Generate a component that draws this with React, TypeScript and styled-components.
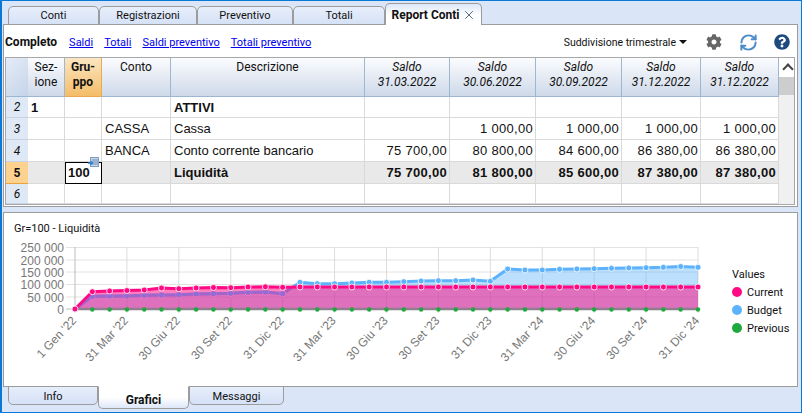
import React from 'react';
import styled, { createGlobalStyle } from 'styled-components';
import { FaCog, FaQuestionCircle } from 'react-icons/fa';
import { RefreshCw, X } from 'lucide-react';

const UI_FONT = 'Roboto, "Noto Sans", sans-serif';
const COLUMNS = '22px 37px 37px 69px 194px 85px 86px 86px 79px 78px';
const ROWS = '39px 21px 22px 22px 22px 20px';

const topTabs = [
  { label: 'Conti', width: 91 },
  { label: 'Registrazioni', width: 98 },
  { label: 'Preventivo', width: 96 },
  { label: 'Totali', width: 92 },
];

const bottomTabs = [
  { label: 'Info', width: 90, active: false },
  { label: 'Grafici', width: 91, active: true },
  { label: 'Messaggi', width: 95, active: false },
];

const links = ['Saldi', 'Totali', 'Saldi preventivo', 'Totali preventivo'];

const headers = [
  { top: 'Sez-', bottom: 'ione' },
  { top: 'Gru-', bottom: 'ppo', selected: true },
  { top: 'Conto', bottom: '' },
  { top: 'Descrizione', bottom: '' },
  { top: 'Saldo', bottom: '31.03.2022', italic: true },
  { top: 'Saldo', bottom: '30.06.2022', italic: true },
  { top: 'Saldo', bottom: '30.09.2022', italic: true },
  { top: 'Saldo', bottom: '31.12.2022', italic: true },
  { top: 'Saldo', bottom: '31.12.2022', italic: true },
];

const rows = [
  { num: '2', cells: ['1', '', '', 'ATTIVI', '', '', '', '', ''], strong: false, heading: true },
  { num: '3', cells: ['', '', 'CASSA', 'Cassa', '', '1 000,00', '1 000,00', '1 000,00', '1 000,00'] },
  { num: '4', cells: ['', '', 'BANCA', 'Conto corrente bancario', '75 700,00', '80 800,00', '84 600,00', '86 380,00', '86 380,00'] },
  { num: '5', cells: ['', '100', '', 'Liquidità', '75 700,00', '81 800,00', '85 600,00', '87 380,00', '87 380,00'], strong: true },
  { num: '6', cells: ['', '', '', '', '', '', '', '', ''] },
];

// chart data, in pixels of the page
const X0 = 75;
const STEP = 623 / 36;
const BASE = 309;
const currentY = [
  309, 291.7, 291, 290.5, 290, 288, 288.7, 288, 287.5, 287.7, 287, 286.8, 287.3, 287,
  287, 287, 287, 287, 287, 287, 287, 287, 287, 287, 287, 287, 287, 287, 287, 287, 287,
  287, 287, 287, 287, 287, 287,
];
const budgetY = [
  309, 296.3, 296, 296, 295.3, 295, 294.7, 294, 293.7, 293.3, 292.3, 292, 293.7, 282.3,
  283.7, 283.7, 283, 282.3, 282.3, 281.7, 281, 280.7, 280.7, 280, 281.3, 269, 270, 270,
  269.3, 269, 268.7, 268.3, 268, 267.7, 267.3, 266.5, 267.3,
];
const xAt = (i: number) => X0 + i * STEP;
const linePoints = (ys: number[]) => ys.map((y, i) => `${xAt(i).toFixed(1)},${y}`).join(' ');
const areaPoints = (ys: number[]) => `${X0},${BASE} ${linePoints(ys)} ${xAt(36).toFixed(1)},${BASE}`;

const yTicks = [
  { label: '250 000', y: 247.5 },
  { label: '200 000', y: 260 },
  { label: '150 000', y: 272 },
  { label: '100 000', y: 284.5 },
  { label: '50 000', y: 297 },
  { label: '0', y: 309 },
];

const xTicks = [
  { label: "1 Gen '22", i: 0 },
  { label: "31 Mar '22", i: 3 },
  { label: "30 Giu '22", i: 6 },
  { label: "30 Set '22", i: 9 },
  { label: "31 Dic '22", i: 12 },
  { label: "31 Mar '23", i: 15 },
  { label: "30 Giu '23", i: 18 },
  { label: "30 Set '23", i: 21 },
  { label: "31 Dic '23", i: 24 },
  { label: "31 Mar '24", i: 27 },
  { label: "30 Giu '24", i: 30 },
  { label: "30 Set '24", i: 33 },
  { label: "31 Dic '24", i: 36 },
];

const legend = [
  { label: 'Current', color: '#ff0a84' },
  { label: 'Budget', color: '#5cb2fb' },
  { label: 'Previous', color: '#1fa83e' },
];

const LineChart: React.FC = () => (
  <svg width={724} height={150} viewBox="4 237 724 150" style={{ display: 'block', flex: 'none' }}>
    {yTicks.map((t) => (
      <g key={t.label}>
        <line x1={66} x2={698} y1={t.y} y2={t.y} stroke={t.y === 309 ? '#bbb' : '#e2e2e2'} />
        <text x={64} y={t.y + 4.5} textAnchor="end" fontSize={12} fill="#777" fontFamily="Liberation Sans, sans-serif">
          {t.label}
        </text>
      </g>
    ))}
    {xTicks.map((t) => (
      <g key={t.label}>
        <line x1={xAt(t.i)} x2={xAt(t.i)} y1={247} y2={313} stroke={t.i === 0 ? '#bdbdbd' : '#dcdcdc'} />
        <text
          x={xAt(t.i) + 2}
          y={321}
          textAnchor="end"
          fontSize={12}
          fill="#777"
          fontFamily="Liberation Sans, sans-serif"
          transform={`rotate(-47 ${xAt(t.i) + 2} 321)`}
        >
          {t.label}
        </text>
      </g>
    ))}
    <polygon points={areaPoints(budgetY)} fill="#5cb2fb" fillOpacity={0.42} />
    <polyline points={linePoints(budgetY)} fill="none" stroke="#5cb2fb" strokeWidth={3} />
    {budgetY.map((y, i) => (
      <circle key={i} cx={xAt(i)} cy={y} r={3} fill="#5cb2fb" stroke="#fff" strokeWidth={0.8} />
    ))}
    <polygon points={areaPoints(currentY)} fill="#ff0a84" fillOpacity={0.52} />
    {/* budget stays violet where it runs under the current area */}
    <polyline points={linePoints(budgetY.slice(0, 13))} fill="none" stroke="#8f6fd8" strokeOpacity={0.6} strokeWidth={3} />
    {budgetY.slice(0, 13).map((y, i) => (
      <circle key={i} cx={xAt(i)} cy={y} r={2.6} fill="#8f6fd8" fillOpacity={0.7} />
    ))}
    <line x1={X0} x2={xAt(36)} y1={BASE} y2={BASE} stroke="#8f7f8c" strokeWidth={2.5} />
    {currentY.map((_, i) => (
      <circle key={i} cx={xAt(i)} cy={BASE + 0.5} r={2.2} fill="#1fa83e" />
    ))}
    <polyline points={linePoints(currentY)} fill="none" stroke="#ff0a84" strokeWidth={3} />
    {currentY.map((y, i) => (
      <circle key={i} cx={xAt(i)} cy={y} r={3} fill="#ff0a84" stroke="#fff" strokeWidth={0.8} />
    ))}
  </svg>
);

const NoteIcon: React.FC = () => (
  <svg width={11} height={11} viewBox="0 0 11 11">
    <rect x={2.5} y={0.5} width={8} height={9} fill="#c5d4e8" stroke="#7f9fc4" />
    <path d="M4 3h6M4 5h6M4 7h6" stroke="#6f90b8" />
    <path d="M0 6h4M2.5 4.2 4.5 6 2.5 7.8" fill="none" stroke="#2f7fd0" strokeWidth={1.4} />
  </svg>
);

const App: React.FC = () => {
  return (
    <Window>
      <GlobalStyle />
      <TabStrip>
        {topTabs.map(({ label, width }) => (
          <TopTab key={label} $width={width}>
            {label}
          </TopTab>
        ))}
        <ActiveTopTab>
          Report Conti
          <X size={14} strokeWidth={1.5} color="#44566e" />
        </ActiveTopTab>
      </TabStrip>

      <MainPanel>
        <Toolbar>
          <ToolbarTitle>Completo</ToolbarTitle>
          {links.map((link) => (
            <ToolbarLink key={link} href="#">
              {link}
            </ToolbarLink>
          ))}
          <Spacer />
          <Dropdown>
            Suddivisione trimestrale
            <Caret />
          </Dropdown>
          <ToolIcons>
            <FaCog size={16} color="#666" />
            <RefreshIcon size={19} strokeWidth={2.5} color="#4a8cc8" />
            <FaQuestionCircle size={16} color="#1c4a7e" />
          </ToolIcons>
        </Toolbar>

        <TableFrame>
          <Grid>
            <CornerCell />
            {headers.map((h, i) => (
              <HeaderCell key={i} $selected={h.selected} $italic={h.italic}>
                <span>{h.top}</span>
                {h.bottom && <span>{h.bottom}</span>}
              </HeaderCell>
            ))}
            {rows.map((row) => (
              <React.Fragment key={row.num}>
                <RowNumber $selected={row.strong}>{row.num}</RowNumber>
                {row.cells.map((cell, i) => (
                  <Cell
                    key={i}
                    $right={i >= 4}
                    $strong={row.strong || row.heading}
                    $shaded={row.strong}
                    $active={row.strong && i === 1}
                  >
                    {cell}
                    {row.strong && i === 1 && (
                      <NoteBadge>
                        <NoteIcon />
                      </NoteBadge>
                    )}
                  </Cell>
                ))}
              </React.Fragment>
            ))}
          </Grid>
          <Scrollbar>
            <ScrollArrow />
            <ScrollThumb />
          </Scrollbar>
        </TableFrame>
      </MainPanel>

      <ChartPanel>
        <ChartTitle>Gr=100 - Liquidità</ChartTitle>
        <ChartBody>
          <LineChart />
          <Legend>
            <LegendTitle>Values</LegendTitle>
            {legend.map(({ label, color }) => (
              <LegendItem key={label}>
                <LegendDot $color={color} />
                {label}
              </LegendItem>
            ))}
          </Legend>
        </ChartBody>
      </ChartPanel>

      <BottomTabs>
        {bottomTabs.map(({ label, width, active }) => (
          <BottomTab key={label} $width={width} $active={active}>
            {label}
          </BottomTab>
        ))}
      </BottomTabs>
    </Window>
  );
};

const GlobalStyle = createGlobalStyle`
  html, body {
    margin: 0;
    padding: 0;
  }
  * {
    box-sizing: border-box;
  }
`;

const Window = styled.div`
  width: 802px;
  height: 413px;
  display: flex;
  flex-direction: column;
  overflow: hidden;
  padding: 0 3px 0 1px;
  background: #dae5f8;
  border: solid #0a78d7;
  border-width: 1px 1px 1px 2px;
  font-family: ${UI_FONT};
  font-size: 11px;
  color: #111;
`;

const TabStrip = styled.div`
  height: 24px;
  flex: none;
  display: flex;
  align-items: flex-end;
  padding-left: 5px;
  margin-bottom: -1px;
  position: relative;
  z-index: 1;
`;

const TopTab = styled.div<{ $width: number }>`
  width: ${({ $width }) => $width}px;
  height: 19px;
  text-align: center;
  line-height: 18px;
  background: linear-gradient(#e8effb, #d5e1f6);
  border: 1px solid #9c9c9c;
  border-radius: 5px 5px 0 0;
`;

const ActiveTopTab = styled.div`
  width: 97px;
  height: 22px;
  display: flex;
  align-items: center;
  justify-content: center;
  gap: 2px;
  font-size: 12px;
  font-weight: 700;
  background: linear-gradient(#dde7f8, #fff 55%);
  border: 1px solid #9c9c9c;
  border-bottom: none;
  border-radius: 5px 5px 0 0;
`;

const MainPanel = styled.div`
  height: 183px;
  flex: none;
  display: flex;
  flex-direction: column;
  background: #fff;
  border: 1px solid #9c9c9c;
  padding: 0 1px 1px 1px;
`;

const Toolbar = styled.div`
  height: 32px;
  flex: none;
  display: flex;
  align-items: center;
  gap: 11px;
  padding: 2px 6px 0 0;
`;

const ToolbarTitle = styled.span`
  font-size: 12px;
  font-weight: 700;
  margin-right: 1px;
`;

const ToolbarLink = styled.a`
  color: #0000ee;
  text-decoration: underline;
`;

const Spacer = styled.div`
  flex: 1;
`;

const Dropdown = styled.div`
  display: flex;
  align-items: center;
  gap: 3px;
  font-size: 10.5px;
`;

const Caret = styled.span`
  width: 0;
  height: 0;
  border: 4px solid transparent;
  border-top: 4px solid #111;
  border-bottom: none;
`;

const ToolIcons = styled.div`
  display: flex;
  align-items: center;
  gap: 18px;
  margin-left: 8px;
`;

const RefreshIcon = styled(RefreshCw)`
  margin: 0 -1.5px;
`;

const TableFrame = styled.div`
  flex: 1;
  display: flex;
  border: 1px solid #a8a8a8;
  margin-right: 1px;
  overflow: hidden;
`;

const Grid = styled.div`
  display: grid;
  grid-template-columns: ${COLUMNS};
  grid-template-rows: ${ROWS};
  flex: none;
`;

const CornerCell = styled.div`
  background: linear-gradient(135deg, #e4ecf8, #c6d4e8);
  border-bottom: 1px solid #9db6d1;
`;

const HeaderCell = styled.div<{ $selected?: boolean; $italic?: boolean }>`
  display: flex;
  flex-direction: column;
  align-items: center;
  padding-top: 2px;
  line-height: 15px;
  font-size: 12px;
  font-style: ${({ $italic }) => ($italic ? 'italic' : 'normal')};
  font-weight: ${({ $selected }) => ($selected ? 700 : 400)};
  background: ${({ $selected }) =>
    $selected ? 'linear-gradient(#fbe6c2, #f4bd68)' : 'linear-gradient(#fbfcfe, #ced9e9)'};
  border-right: 1px solid ${({ $selected }) => ($selected ? '#eda94e' : '#9db6d1')};
  border-bottom: 1px solid ${({ $selected }) => ($selected ? '#eda94e' : '#9db6d1')};
`;

const RowNumber = styled.div<{ $selected?: boolean }>`
  display: flex;
  align-items: center;
  justify-content: center;
  font-size: 12px;
  font-style: ${({ $selected }) => ($selected ? 'normal' : 'italic')};
  font-weight: ${({ $selected }) => ($selected ? 700 : 400)};
  background: ${({ $selected }) => ($selected ? '#fdd28f' : '#dfe8f5')};
  border-bottom: 1px solid ${({ $selected }) => ($selected ? '#ee9f3e' : '#c3d2e6')};
`;

const Cell = styled.div<{ $right?: boolean; $strong?: boolean; $shaded?: boolean; $active?: boolean }>`
  position: relative;
  display: flex;
  align-items: center;
  justify-content: ${({ $right }) => ($right ? 'flex-end' : 'flex-start')};
  padding: 0 2px 0 3px;
  white-space: nowrap;
  font-family: "Liberation Sans", sans-serif;
  font-size: 13px;
  letter-spacing: ${({ $right }) => ($right ? '0.3px' : '0')};
  font-weight: ${({ $strong }) => ($strong ? 700 : 400)};
  background: ${({ $shaded, $active }) => ($active ? '#fff' : $shaded ? '#e9e9e9' : '#fff')};
  border-right: 1px solid ${({ $active }) => ($active ? '#000' : '#d9d9d9')};
  border-bottom: 1px solid ${({ $active }) => ($active ? '#000' : '#d9d9d9')};
  ${({ $active }) => $active && 'outline: 1px solid #000; outline-offset: -1px;'}
`;

const NoteBadge = styled.span`
  position: absolute;
  top: -5px;
  right: 2px;
  line-height: 0;
`;

const Scrollbar = styled.div`
  flex: 1;
  display: flex;
  flex-direction: column;
  background: #f0f0f0;
`;

const ScrollArrow = styled.div`
  height: 19px;
  background: #fff;
  position: relative;
  &::after {
    content: '';
    position: absolute;
    left: 5px;
    top: 7px;
    width: 6px;
    height: 6px;
    border: solid #444;
    border-width: 2px 0 0 2px;
    transform: rotate(45deg);
  }
`;

const ScrollThumb = styled.div`
  height: 18px;
  background: #cdcdcd;
`;

const ChartPanel = styled.div`
  height: 175px;
  flex: none;
  margin-top: 5px;
  display: flex;
  flex-direction: column;
  background: #fff;
  border: 1px solid #9c9c9c;
`;

const ChartTitle = styled.div`
  height: 24px;
  flex: none;
  padding: 8px 0 0 10px;
  line-height: 15px;
`;

const ChartBody = styled.div`
  flex: 1;
  display: flex;
  min-height: 0;
`;

const Legend = styled.div`
  display: flex;
  flex-direction: column;
  padding-top: 30px;
  margin-left: 4px;
`;

const LegendTitle = styled.div`
  height: 16px;
  line-height: 16px;
`;

const LegendItem = styled.div`
  height: 18px;
  display: flex;
  align-items: center;
  gap: 5px;
`;

const LegendDot = styled.span<{ $color: string }>`
  width: 10px;
  height: 10px;
  border-radius: 50%;
  background: ${({ $color }) => $color};
`;

const BottomTabs = styled.div`
  flex: 1;
  display: flex;
  align-items: flex-start;
  padding-left: 5px;
  margin-top: -1px;
`;

const BottomTab = styled.div<{ $width: number; $active: boolean }>`
  width: ${({ $width }) => $width}px;
  height: ${({ $active }) => ($active ? '23px' : '19px')};
  text-align: center;
  line-height: ${({ $active }) => ($active ? '26px' : '19px')};
  font-size: ${({ $active }) => ($active ? '12px' : '11px')};
  font-weight: ${({ $active }) => ($active ? 700 : 400)};
  background: ${({ $active }) =>
    $active ? 'linear-gradient(#fff 50%, #dde7f8)' : 'linear-gradient(#e6eefb, #d5e1f6)'};
  border: 1px solid #9c9c9c;
  border-top-color: ${({ $active }) => ($active ? '#fff' : '#9c9c9c')};
  border-radius: 0 0 5px 5px;
`;

export default App;
